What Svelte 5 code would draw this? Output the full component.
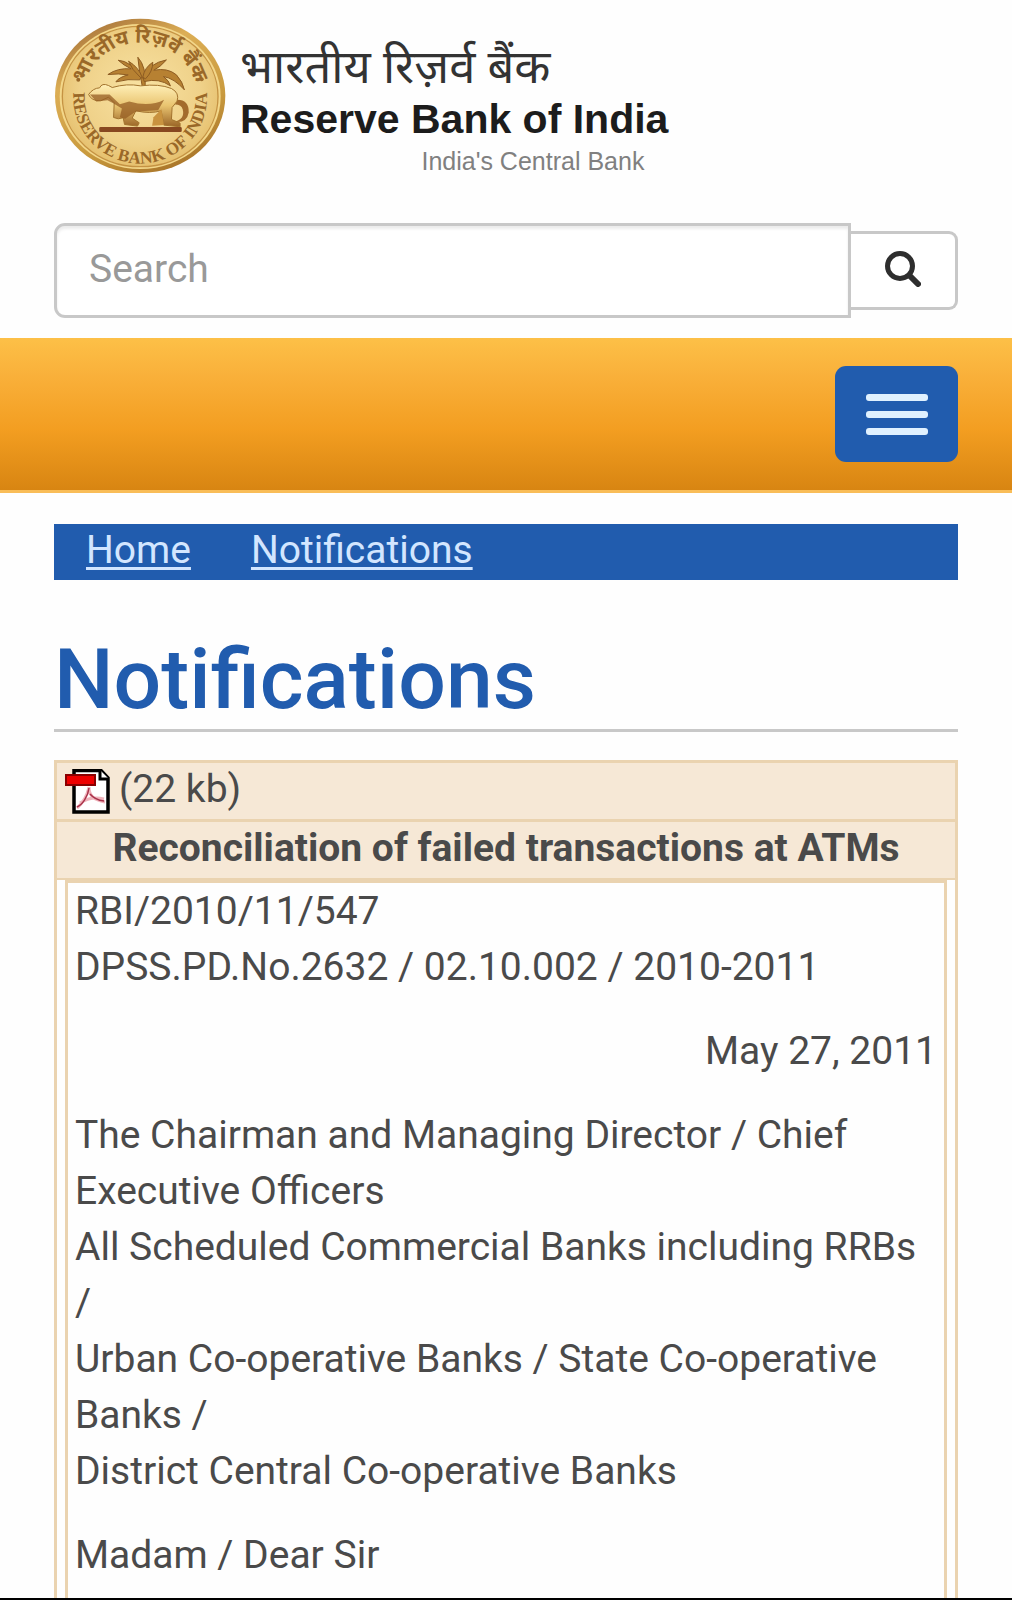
<script>
  const crumbs = ['Home', 'Notifications'];
  const addressees = [
    'The Chairman and Managing Director / Chief Executive Officers',
    'All Scheduled Commercial Banks including RRBs /',
    'Urban Co-operative Banks / State Co-operative Banks /',
    'District Central Co-operative Banks'
  ];
</script>

<div class="page">
  <header class="masthead">
    <a class="brand" href="#home">
      <svg class="seal" viewBox="44 52 520 470" aria-hidden="true">
        <defs>
          <linearGradient id="rim" x1="0.2" y1="0" x2="0.7" y2="1">
            <stop offset="0" stop-color="#a5713a" />
            <stop offset="0.3" stop-color="#dcae55" />
            <stop offset="0.7" stop-color="#c99a3e" />
            <stop offset="1" stop-color="#a87429" />
          </linearGradient>
          <radialGradient id="face" cx="0.5" cy="0.45" r="0.6">
            <stop offset="0" stop-color="#f8e2a2" />
            <stop offset="0.65" stop-color="#efd189" />
            <stop offset="1" stop-color="#e3bb66" />
          </radialGradient>
          <linearGradient id="body" x1="0" y1="0" x2="0" y2="1">
            <stop offset="0" stop-color="#fff0b8" />
            <stop offset="0.5" stop-color="#e9c470" />
            <stop offset="1" stop-color="#9a6426" />
          </linearGradient>
          <path id="lower" d="M104 262 A201 201 0 1 0 502 262" />
          <path id="upper" d="M138 250 A169 155 0 0 1 468 250" />
        </defs>
        <ellipse cx="303" cy="288" rx="256" ry="232" fill="url(#rim)" />
        <ellipse cx="303" cy="290" rx="242" ry="218" fill="#f3d78a" />
        <ellipse cx="303" cy="290" rx="234" ry="211" fill="url(#face)" stroke="#c59343" stroke-width="4" />
        <text class="ring" font-size="52"><textPath href="#lower" startOffset="50%" text-anchor="middle">RESERVE BANK OF INDIA</textPath></text>
        <text class="ring" font-size="62"><textPath href="#upper" startOffset="50%" text-anchor="middle">भारतीय रिज़र्व बैंक</textPath></text>
        <circle cx="117" cy="240" r="6" fill="#9a6828" />
        <circle cx="488" cy="238" r="6" fill="#9a6828" />
        <g fill="#b78132" stroke="#8d5b22" stroke-width="3">
          <path d="M309 258 Q300 215 296 172 Q322 200 318 258Z" />
          <path d="M305 232 Q275 183 237 181 Q253 196 276 207 Q236 203 206 224 Q239 220 267 225 Q239 232 230 246 Q267 236 302 240Z" />
          <path d="M312 232 Q330 190 382 180 Q363 202 344 211 Q386 203 412 225 Q431 246 436 270 Q405 235 373 230 Q390 242 394 258 Q360 234 315 245Z" />
          <path d="M303 232 Q278 210 268 184 Q299 202 310 235Z" />
          <path d="M311 232 Q316 203 341 187 Q341 215 319 237Z" />
        </g>
        <path d="M411 300 Q450 298 449 338 Q443 371 406 366 Q438 358 431 329 Q427 314 408 314Z" fill="#a36b2c" />
        <path d="M148 284 Q161 265 181 264 Q188 248 208 257 L219 263 Q263 250 304 258 Q360 251 397 266 Q422 279 414 304 L399 323 L397 359 L423 370 L423 381 L374 376 L366 333 Q334 343 290 333 L279 355 L300 369 L295 379 L256 374 L252 354 L237 357 L223 353 L225 309 L208 292 L184 303 Q157 304 148 284Z" fill="url(#body)" stroke="#a2722d" stroke-width="3" />
        <path d="M152 284 L211 284 L242 313 L270 305 Q331 323 375 300 L357 331 L290 335 L258 357 L242 352 L248 326 L222 310 L205 301 L171 305Z" fill="#965e24" opacity="0.75" />
        <path d="M343 352 L367 328 L374 376 L339 378Z" fill="#c9933f" />
        <rect x="180" y="382" width="248" height="15" rx="4" fill="#884820" />
      </svg>
      <span class="names">
        <span class="hindi" lang="hi">भारतीय रिज़र्व बैंक</span>
        <span class="english">Reserve Bank of India</span>
        <span class="tagline">India's Central Bank</span>
      </span>
    </a>
    <form class="search" role="search">
      <input type="text" placeholder="Search" aria-label="Search" />
      <button type="button" aria-label="Search">
        <svg viewBox="0 0 36 36" aria-hidden="true">
          <circle cx="15" cy="15" r="12.5" fill="none" stroke="#2e2e2e" stroke-width="5" />
          <path d="M24.500 24.500 L33 33" stroke="#2e2e2e" stroke-width="6" stroke-linecap="round" />
        </svg>
      </button>
    </form>
  </header>

  <nav class="bar" aria-label="Main">
    <button type="button" class="toggle" aria-label="Toggle navigation">
      <span></span><span></span><span></span>
    </button>
  </nav>

  <main>
    <nav class="crumbs" aria-label="Breadcrumb">
      {#each crumbs as crumb}
        <a href="#{crumb.toLowerCase()}">{crumb}</a>
      {/each}
    </nav>

    <h1>Notifications</h1>

    <article class="notice">
      <div class="file">
        <a href="#pdf" aria-label="Download PDF">
          <svg viewBox="0 0 45 45" aria-hidden="true">
            <path d="M9 1.500H36L43 9V43H9Z" fill="#fff" stroke="#000" stroke-width="3.500" />
            <path d="M35 1V10H44" fill="#fff" stroke="#000" stroke-width="3" />
            <path d="M24 18C22 27 19 33 12 39M24 18C24 27 29 31 40 33M15 34C24 28 31 28 39 30" fill="none" stroke="#f0b4bc" stroke-width="3" />
            <path d="M24 19C23 28 17 36 12 38M25 25Q30 31 39 32" fill="none" stroke="#a8324a" stroke-width="1.500" />
            <rect x="1" y="6" width="29" height="10" fill="#ee0000" stroke="#8a0000" stroke-width="2" />
          </svg>
        </a>
        <span>(22 kb)</span>
      </div>
      <h2>Reconciliation of failed transactions at ATMs</h2>
      <div class="frame">
        <div class="letter">
          <p>RBI/2010/11/547<br />DPSS.PD.No.2632 / 02.10.002 / 2010-2011</p>
          <p class="date">May 27, 2011</p>
          <p>
            {#each addressees as line, i}{#if i > 0}<br />{/if}{line}{/each}
          </p>
          <p>Madam / Dear Sir</p>
        </div>
      </div>
    </article>
  </main>
</div>

<style>
  :global(body) {
    background: #fefefe;
  }
  .page {
    box-sizing: border-box;
    display: flex;
    flex-direction: column;
    height: 100vh;
    overflow: hidden;
    border-bottom: 2px solid #000;
    font-family: Roboto, 'Noto Sans', sans-serif;
    font-size: 39px;
    line-height: 56px;
    color: #4a4a4a;
  }
  .masthead {
    padding: 17px 54px 20px;
  }
  .brand {
    display: flex;
    gap: 13px;
    height: 206px;
    align-items: flex-start;
    color: #1c1c1c;
    text-decoration: none;
  }
  .seal {
    width: 173px;
    height: 157px;
    flex: none;
  }
  .ring {
    font-family: 'Liberation Serif', 'Noto Sans', serif;
    font-weight: bold;
    fill: #9a6828;
  }
  .names {
    display: flex;
    flex-direction: column;
    padding-top: 20px;
    white-space: nowrap;
  }
  .hindi {
    font-family: 'Noto Sans', sans-serif;
    font-size: 47px;
    line-height: 56px;
    color: #333;
  }
  .english {
    font-family: 'Liberation Sans', sans-serif;
    font-weight: bold;
    font-size: 41px;
    line-height: 52px;
  }
  .tagline {
    align-self: flex-end;
    padding-right: 24px;
    font-family: 'Liberation Sans', sans-serif;
    font-size: 25px;
    line-height: 32px;
    color: #808080;
  }
  .search {
    display: flex;
    align-items: center;
  }
  .search input {
    box-sizing: border-box;
    flex: 1;
    min-width: 0;
    height: 95px;
    padding: 0 32px 4px;
    border: 3px solid #c8c8c8;
    border-radius: 11px 0 0 11px;
    background: #fff;
    box-shadow: inset 0 3px 3px rgba(0, 0, 0, 0.08);
    font: inherit;
    color: #4a4a4a;
  }
  .search input::placeholder {
    color: #999;
    opacity: 1;
  }
  .search button {
    display: flex;
    align-items: center;
    justify-content: center;
    box-sizing: border-box;
    width: 107px;
    height: 79px;
    padding: 0 0 4px;
    border: 3px solid #c8c8c8;
    border-left: 0;
    border-radius: 0 9px 9px 0;
    background: #fff;
  }
  .search svg {
    width: 36px;
    height: 36px;
  }
  .bar {
    display: flex;
    justify-content: flex-end;
    padding: 28px 54px;
    border-bottom: 3px solid #f9bd58;
    background: linear-gradient(#fdc047 0%, #f9b03a 25%, #f39e21 60%, #d88512 100%);
  }
  .toggle {
    display: flex;
    flex-direction: column;
    align-items: center;
    justify-content: center;
    gap: 10px;
    width: 123px;
    height: 96px;
    padding: 0;
    border: 0;
    border-radius: 11px;
    background: #215cae;
  }
  .toggle span {
    width: 62px;
    height: 7px;
    border-radius: 3px;
    background: #e0f1ff;
  }
  main {
    display: flex;
    flex: 1;
    flex-direction: column;
    min-height: 0;
    padding: 31px 54px 0;
  }
  .crumbs {
    display: flex;
    gap: 60px;
    padding: 0 32px 4px;
    line-height: 52px;
    background: #215cae;
  }
  .crumbs a {
    color: #d3e6ff;
    text-decoration-thickness: 3px;
    text-underline-offset: 4px;
  }
  h1 {
    margin: 54px 0 28px;
    padding-bottom: 3px;
    border-bottom: 3px solid #c8c8c8;
    font-size: 84px;
    font-weight: 500;
    line-height: 92px;
    color: #215cae;
  }
  .notice {
    display: flex;
    flex: 1;
    flex-direction: column;
    border: 3px solid #ead3b0;
    border-bottom: 0;
  }
  .file,
  h2 {
    padding-bottom: 4px;
    border-bottom: 3px solid #ead3b0;
    line-height: 52px;
    background: #f6e8d6;
  }
  .file {
    display: flex;
    gap: 9px;
    padding-left: 8px;
  }
  .file a {
    display: flex;
    align-items: center;
    padding-top: 4px;
  }
  .file svg {
    width: 45px;
    height: 45px;
  }
  h2 {
    margin: 0;
    border-bottom-width: 2px;
    font-size: 39px;
    font-weight: 700;
    text-align: center;
  }
  .frame {
    display: flex;
    flex: 1;
    padding: 0 8px;
  }
  .letter {
    flex: 1;
    padding: 0 7px;
    border: 3px solid #ead3b0;
    border-bottom: 0;
  }
  p {
    margin: 0 0 28px;
  }
  .date {
    text-align: right;
  }
</style>
